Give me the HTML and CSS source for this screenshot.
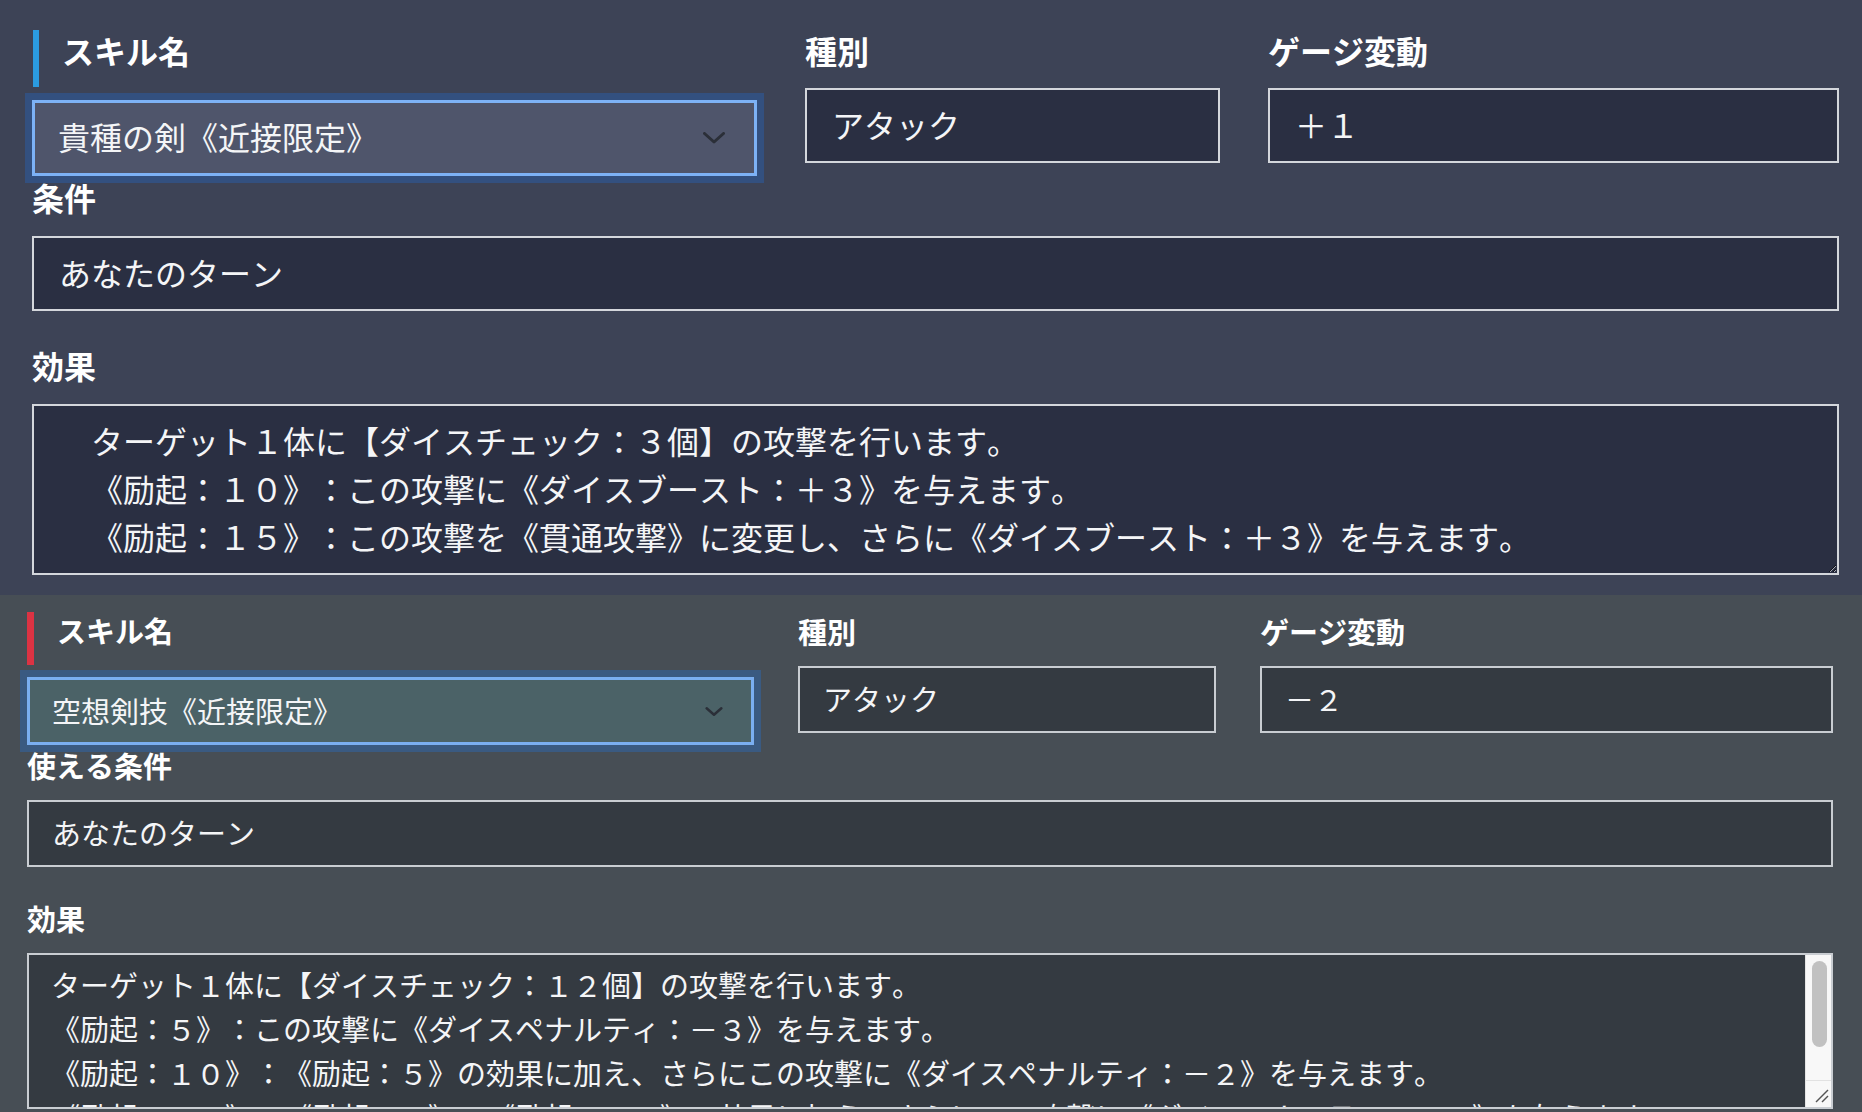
FILE: index.html
```html
<!DOCTYPE html>
<html lang="ja">
<head>
<meta charset="utf-8">
<title>スキル編集</title>
<link rel="stylesheet" href="styles.css">
</head>
<body>
<main class="skills">
  <section class="skill skill--primary">
    <div class="skill__top">
      <div class="field">
        <div class="label label--bar">スキル名</div>
        <div class="select">
          <span class="select__value">貴種の剣《近接限定》</span>
          <svg class="select__chevron" viewBox="0 0 22 12" aria-hidden="true"><polyline points="1.5,1.5 11,10 20.5,1.5" fill="none" stroke="#2b2f38" stroke-width="3" stroke-linecap="round" stroke-linejoin="round"/></svg>
        </div>
      </div>
      <div class="field">
        <label class="label label--plain">種別</label>
        <input class="input" type="text" value="アタック">
      </div>
      <div class="field">
        <label class="label label--plain">ゲージ変動</label>
        <input class="input" type="text" value="＋１">
      </div>
    </div>
    <div class="field">
      <label class="label label--row">条件</label>
      <input class="input" type="text" value="あなたのターン">
    </div>
    <div class="field">
      <label class="label label--effect">効果</label>
      <textarea class="textarea">　ターゲット１体に【ダイスチェック：３個】の攻撃を行います。
　《励起：１０》：この攻撃に《ダイスブースト：＋３》を与えます。
　《励起：１５》：この攻撃を《貫通攻撃》に変更し、さらに《ダイスブースト：＋３》を与えます。</textarea>
    </div>
  </section>

  <section class="skill skill--secondary">
    <div class="skill__top">
      <div class="field">
        <div class="label label--bar">スキル名</div>
        <div class="select">
          <span class="select__value">空想剣技《近接限定》</span>
          <svg class="select__chevron" viewBox="0 0 22 12" aria-hidden="true"><polyline points="2,2 11,10 20,2" fill="none" stroke="#2b2f38" stroke-width="3" stroke-linecap="round" stroke-linejoin="round"/></svg>
        </div>
      </div>
      <div class="field">
        <label class="label label--plain">種別</label>
        <input class="input" type="text" value="アタック">
      </div>
      <div class="field">
        <label class="label label--plain">ゲージ変動</label>
        <input class="input" type="text" value="－２">
      </div>
    </div>
    <div class="field">
      <label class="label label--row">使える条件</label>
      <input class="input" type="text" value="あなたのターン">
    </div>
    <div class="field">
      <label class="label label--effect">効果</label>
      <div class="scrollbox">
        <textarea class="textarea">ターゲット１体に【ダイスチェック：１２個】の攻撃を行います。
《励起：５》：この攻撃に《ダイスペナルティ：－３》を与えます。
《励起：１０》：《励起：５》の効果に加え、さらにこの攻撃に《ダイスペナルティ：－２》を与えます。
《励起：１５》：《励起：５》、《励起：１０》の効果に加え、さらにこの攻撃に《ダイスペナルティ：－３》を与えます。</textarea>
        <div class="scrollbar" aria-hidden="true">
          <div class="scrollbar__track">
            <div class="scrollbar__thumb"></div>
          </div>
          <div class="scrollbar__corner">
            <svg viewBox="0 0 26 26" width="26" height="26"><line x1="10" y1="22" x2="22" y2="10" stroke="#555" stroke-width="1.5"/><line x1="16" y1="22" x2="22" y2="16" stroke="#555" stroke-width="1.5"/></svg>
          </div>
        </div>
      </div>
    </div>
  </section>
</main>
</body>
</html>
```

FILE: styles.css
```css
* {
  box-sizing: border-box;
}

html, body {
  margin: 0;
  padding: 0;
  height: 1112px;
  overflow: hidden;
  background: #474e55;
}

body {
  font-family: "Noto Sans CJK JP", "Noto Sans", sans-serif;
  color: #f4f5f7;
  text-spacing-trim: space-all;
  font-kerning: none;
}

.skills {
  display: flex;
  flex-direction: column;
}

.skill {
  display: flex;
  flex-direction: column;
}

.skill__top {
  display: grid;
  align-items: start;
}

.field {
  display: flex;
  flex-direction: column;
}

.label {
  display: block;
  font-weight: 700;
  color: #ffffff;
  white-space: nowrap;
}

.select {
  display: flex;
  align-items: center;
  justify-content: space-between;
  border-style: solid;
  color: #f4f5f7;
}

.select__value {
  white-space: nowrap;
}

.select__chevron {
  display: block;
}

.input,
.textarea {
  display: block;
  width: 100%;
  margin: 0;
  font-family: inherit;
  color: #f4f5f7;
  border-style: solid;
  border-radius: 0;
  outline: none;
  text-spacing-trim: space-all;
  font-kerning: none;
}

.textarea {
  resize: both;
  overflow: auto;
}

/* ---------- primary (top) card ---------- */
.skill--primary {
  background: #3d4356;
  height: 595px;
  padding: 30px 23px 0 32px;
}

.skill--primary .skill__top {
  grid-template-columns: 725px 415px 1fr;
  column-gap: 48px;
}

.skill--primary .label {
  font-size: 32px;
  line-height: 40px;
}

.skill--primary .label--bar {
  border-left: 6px solid #2b9be0;
  margin-left: 1px;
  padding: 0 0 17px 23px;
}

.skill--primary .label--plain {
  padding-top: 0;
  margin-bottom: 18px;
}

.skill--primary .label--row {
  margin-top: 1px;
  margin-bottom: 19px;
}

.skill--primary .label--effect {
  margin-top: 34px;
  margin-bottom: 19px;
}

.skill--primary .select {
  margin-top: 13px;
  height: 76px;
  border-width: 3px;
  border-color: #7db2f6;
  box-shadow: 0 0 0 7px #33507f;
  background: #4f556b;
  padding: 0 29px 4px 23px;
  font-size: 32px;
}

.skill--primary .select__chevron {
  width: 22px;
  height: 12px;
  margin-top: 4px;
}

.skill--primary .input {
  height: 75px;
  border-width: 2px;
  border-color: #d4d7dc;
  background: #2a2f42;
  padding: 0 25px 4px;
  font-size: 32px;
}

.skill--primary .textarea {
  height: 171px;
  border-width: 2px;
  border-color: #d4d7dc;
  background: #2a2f42;
  padding: 10px 25px 12px;
  font-size: 32px;
  line-height: 48px;
}

/* ---------- secondary (bottom) card ---------- */
.skill--secondary {
  background: #474e55;
  height: 517px;
  padding: 17px 29px 0 27px;
  overflow: hidden;
}

.skill--secondary .skill__top {
  grid-template-columns: 727px 418px 1fr;
  column-gap: 44px;
}

.skill--secondary .label {
  font-size: 29px;
  line-height: 36px;
}

.skill--secondary .label--bar {
  border-left: 7px solid #dc3343;
  padding: 0 0 17px 23px;
}

.skill--secondary .label--plain {
  padding-top: 1px;
  margin-bottom: 17px;
}

.skill--secondary .label--row {
  margin-top: 2px;
  margin-bottom: 17px;
}

.skill--secondary .label--effect {
  margin-top: 33px;
  margin-bottom: 17px;
}

.skill--secondary .select {
  margin-top: 12px;
  height: 68px;
  border-width: 3px;
  border-color: #7aaef0;
  box-shadow: 0 0 0 7px #3a5a81;
  background: #4b6267;
  padding: 0 28px 3px 22px;
  font-size: 29px;
}

.skill--secondary .select__chevron {
  width: 18px;
  height: 11px;
  margin-top: 3px;
}

.skill--secondary .input {
  height: 67px;
  border-width: 2px;
  border-color: #c9cdd2;
  background: #343a41;
  padding: 0 23px 3px;
  font-size: 29px;
}

.skill--secondary .textarea {
  height: 156px;
  border-width: 2px;
  border-color: #c9cdd2;
  background: #343a41;
  padding: 7px 40px 9px 22px;
  font-size: 29px;
  line-height: 44px;
  overflow: hidden;
  resize: none;
}

/* drawn scrollbar overlaid on the scrolling textarea */
.scrollbox {
  position: relative;
}

.scrollbar {
  position: absolute;
  top: 2px;
  right: 2px;
  bottom: 2px;
  width: 26px;
  display: flex;
  flex-direction: column;
  background: #f8f8f8;
  border-left: 1px solid #e4e4e4;
}

.scrollbar__track {
  flex: 1;
  padding: 6px 4px 0 6px;
}

.scrollbar__thumb {
  height: 86px;
  border-radius: 8px;
  background: #c1c1c1;
}

.scrollbar__corner {
  height: 27px;
  border-top: 1px solid #e2e2e2;
}

.scrollbar__corner svg {
  display: block;
  margin-top: -1px;
}
```
